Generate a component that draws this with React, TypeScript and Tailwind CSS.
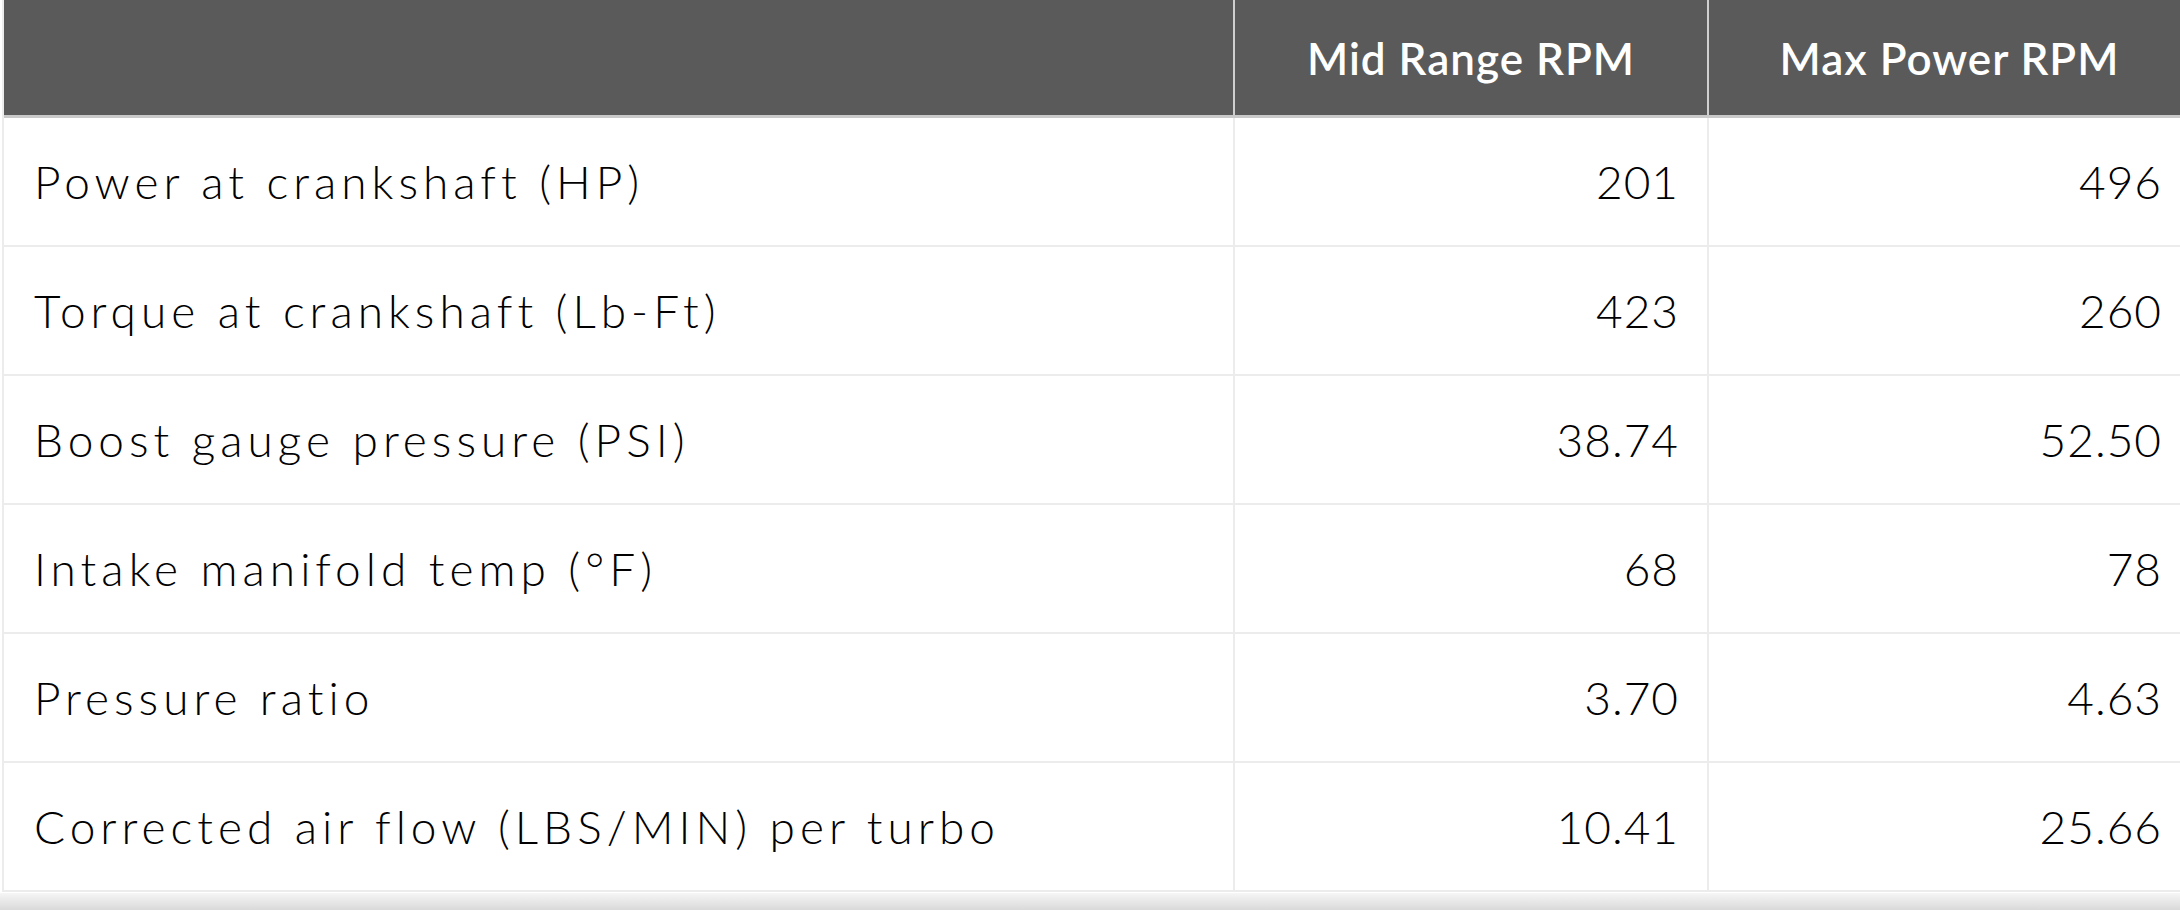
const rows = [
  { label: "Power at crankshaft (HP)", mid: "201", max: "496" },
  { label: "Torque at crankshaft (Lb-Ft)", mid: "423", max: "260" },
  { label: "Boost gauge pressure (PSI)", mid: "38.74", max: "52.50" },
  { label: "Intake manifold temp (°F)", mid: "68", max: "78" },
  { label: "Pressure ratio", mid: "3.70", max: "4.63" },
  { label: "Corrected air flow (LBS/MIN) per turbo", mid: "10.41", max: "25.66" },
];

export default function App() {
  return (
    <div className="h-[910px] w-[2180px] overflow-hidden bg-white font-['Lato','Liberation_Sans',sans-serif] text-black">
      <div className="ml-[2px] w-[2188px] border-l-2 border-[#ececec]">
        <div className="grid h-[118px] grid-cols-[1229px_474px_483px] border-b-[3px] border-[#c9c9c9] bg-[#5a5a5a] text-[44px] font-semibold tracking-[1px] text-white">
          <div />
          <div className="flex items-center justify-center border-l-2 border-[#cfcfcf]">Mid Range RPM</div>
          <div className="flex items-center justify-center border-l-2 border-[#cfcfcf]">Max Power RPM</div>
        </div>
        {rows.map((row) => (
          <div
            key={row.label}
            className="grid h-[129px] grid-cols-[1229px_474px_483px] border-b-2 border-[#ececec] text-[46px] font-light"
          >
            <div className="flex items-center px-[30px] tracking-[5px]">{row.label}</div>
            <div className="flex items-center justify-end border-l-2 border-[#ececec] pr-[28px] tracking-[1px]">{row.mid}</div>
            <div className="flex items-center justify-end border-l-2 border-[#ececec] pr-[28px] tracking-[1px]">{row.max}</div>
          </div>
        ))}
      </div>
      <div className="mt-px h-[17px] w-full bg-gradient-to-b from-[#f6f6f6] to-[#d9d9d9]" />
    </div>
  );
}
